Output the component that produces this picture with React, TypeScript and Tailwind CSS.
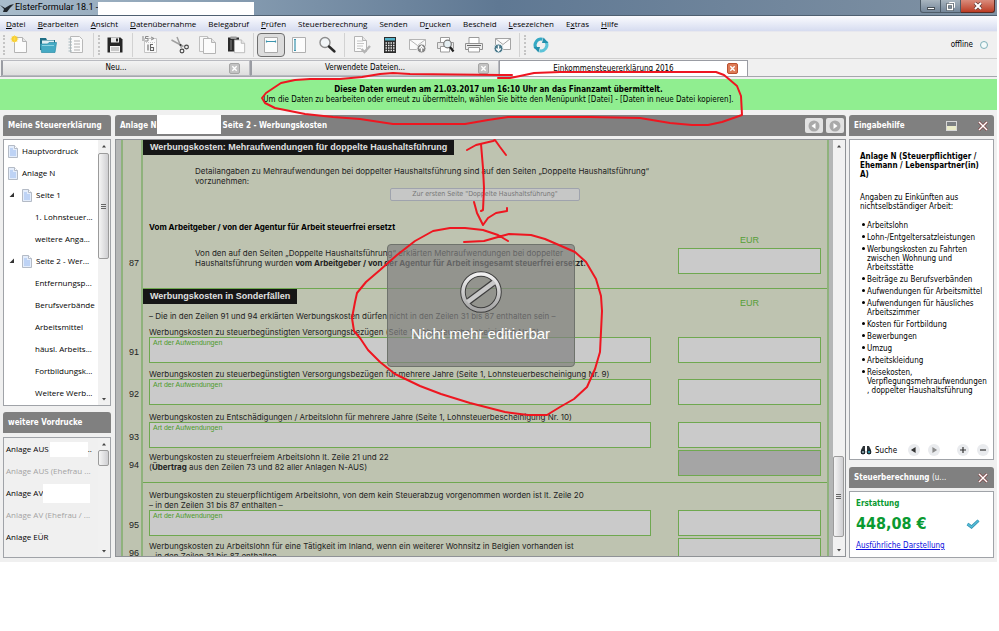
/**
 * ElsterFormular main window
 * - Title bar, menu, toolbar and document tabs
 * - Form tree, form page and help column
 */

import type { ReactNode } from 'react';

const MENU = [
  ['', 'D', 'atei'],
  ['', 'B', 'earbeiten'],
  ['', 'A', 'nsicht'],
  ['', 'D', 'atenübernahme'],
  ['Belegabruf', '', ''],
  ['', 'P', 'rüfen'],
  ['Steuerberechnung', '', ''],
  ['Senden', '', ''],
  ['D', 'r', 'ucken'],
  ['Bescheid', '', ''],
  ['', 'L', 'esezeichen'],
  ['E', 'x', 'tras'],
  ['', 'H', 'ilfe'],
];

const HELP_ITEMS = [
  'Arbeitslohn',
  'Lohn-/Entgeltersatzleistungen',
  'Werbungskosten zu Fahrten zwischen Wohnung und Arbeitsstätte',
  'Beiträge zu Berufsverbänden',
  'Aufwendungen für Arbeitsmittel',
  'Aufwendungen für häusliches Arbeitszimmer',
  'Kosten für Fortbildung',
  'Bewerbungen',
  'Umzug',
  'Arbeitskleidung',
  'Reisekosten, Verpflegungsmehraufwendungen , doppelter Haushaltsführung',
];

const TREE = [
  { label: 'Hauptvordruck', level: 0 },
  { label: 'Anlage N', level: 0 },
  { label: 'Seite 1', level: 1 },
  { label: '1. Lohnsteuer...', level: 2 },
  { label: 'weitere Anga...', level: 2 },
  { label: 'Seite 2 - Wer...', level: 1 },
  { label: 'Entfernungsp...', level: 2 },
  { label: 'Berufsverbände', level: 2 },
  { label: 'Arbeitsmittel', level: 2 },
  { label: 'häusl. Arbeits...', level: 2 },
  { label: 'Fortbildungsk...', level: 2 },
  { label: 'Weitere Werb...', level: 2 },
];

/* ---------- Toolbar icons ---------- */

function Icon({ children }: { children: ReactNode }) {
  return (
    <svg viewBox="0 0 20 20" className="size-5" fill="none" aria-hidden="true">
      {children}
    </svg>
  );
}

function Sheet({ x = 4, y = 2 }: { x?: number; y?: number }) {
  return (
    <g transform={`translate(${x} ${y})`}>
      <path d="M0.5 0.5h8l4 4v11h-12z" fill="#fbfbfb" stroke="#b4b4b4" />
      <path d="M8.5 0.5v4h4" fill="#e6e6e6" stroke="#b4b4b4" />
    </g>
  );
}

const ICONS = {
  newDoc: (
    <Icon>
      <Sheet x={4} y={2} />
      <circle cx="4.5" cy="4" r="3" fill="#f8c81c" />
      <path d="M4.5 0v8M0.5 4h8M1.7 1.2l5.6 5.6M7.3 1.2l-5.6 5.6" stroke="#fbdc55" strokeWidth="0.7" />
    </Icon>
  ),
  folder: (
    <Icon>
      <path d="M2 3h6l1 2h8v10H2z" fill="#1f6f86" />
      <path d="M4 5.500h12v5H4z" fill="#dff0f4" />
      <path d="M2.500 9h7l1.500-1.500h7.500l-1.500 10H3.500z" fill="#45aac4" stroke="#2d8ca6" strokeWidth="0.7" />
      <path d="M4 10.500h12" stroke="#8dd3e2" />
    </Icon>
  ),
  list: (
    <Icon>
      <path d="M4.500 1.500h9l3 3v13h-12z" fill="#fafafa" stroke="#b8b8b8" />
      <path d="M8 6h6M8 9h6M8 12h6M8 15h6" stroke="#b0b0b0" />
      <path d="M2.500 4h3.500M2.500 7h3.500M2.500 10h3.500M2.500 13h3.500M2.500 16h3.500" stroke="#a4b7bd" />
    </Icon>
  ),
  save: (
    <Icon>
      <path d="M2.500 2.500h13l2 2v13h-15z" fill="#262626" />
      <path d="M6 2.500h8v5H6z" fill="#e9e9e9" />
      <path d="M11 3.500h2v3h-2z" fill="#262626" />
      <path d="M5 11h10v6.500H5z" fill="#f4f4f4" />
      <path d="M6 13h8M6 15h8" stroke="#8c8c8c" strokeWidth="0.8" />
    </Icon>
  ),
  calendar: (
    <Icon>
      <path d="M4.500 3.500h12v14h-12z" fill="#fafafa" stroke="#c4c4c4" />
      <path d="M3 1v5M8.500 1.500h-3v2h2.500v2.500h-3M11 2l3 1.500-3 1.500" stroke="#888" />
      <path d="M8 9.500v6M13 9.500h-2.500v6h3v-3h-3" stroke="#666" strokeWidth="1.100" />
      <path d="M6 7.500h9" stroke="#c9c9c9" strokeDasharray="1 1" />
    </Icon>
  ),
  cut: (
    <Icon>
      <path d="M1.500 5l12 6.500M7 2l4.500 11" stroke="#a0a0a0" strokeWidth="1.500" />
      <circle cx="16.500" cy="12" r="1.900" stroke="#444" strokeWidth="1.100" />
      <circle cx="12" cy="16" r="1.900" stroke="#444" strokeWidth="1.100" />
      <circle cx="10.500" cy="10" r="1" fill="#333" />
    </Icon>
  ),
  copy: (
    <Icon>
      <g opacity="0.8">
        <Sheet x={1} y={1} />
      </g>
      <Sheet x={5} y={3} />
    </Icon>
  ),
  paste: (
    <Icon>
      <path d="M2 2.500h11v14H2z" fill="#2b2b2b" />
      <path d="M4.500 1.500h6v2.500h-6z" fill="#9b9b9b" />
      <path d="M4 5h2v10H4z" fill="#5a5a5a" />
      <g transform="translate(8 4.500) scale(0.850)">
        <Sheet x={0} y={0} />
      </g>
    </Icon>
  ),
  pageWidth: (
    <Icon>
      <path d="M3.500 2.500h13v15h-13z" fill="#fcfcfc" stroke="#aaa" />
      <path d="M5 6.500h10M5.500 5.500v2M14.500 5.500v2" stroke="#3b93ad" strokeWidth="1.200" />
    </Icon>
  ),
  pageHeight: (
    <Icon>
      <path d="M3.500 2.500h13v15h-13z" fill="#fcfcfc" stroke="#b0b0b0" />
      <path d="M6 4v12M5 4.500h2M5 15.500h2" stroke="#3b93ad" strokeWidth="1.200" />
    </Icon>
  ),
  zoom: (
    <Icon>
      <circle cx="8" cy="7.500" r="5" fill="#f2f6f8" stroke="#8d8d8d" strokeWidth="1.400" />
      <path d="M12 11.500l5.500 5" stroke="#2a2a2a" strokeWidth="2.400" strokeLinecap="round" />
    </Icon>
  ),
  check: (
    <Icon>
      <Sheet x={2} y={1} />
      <path d="M5 6h6M5 8.500h7M5 11h6M5 13.500h4" stroke="#c6c6c6" />
      <path d="M9.500 14l3 3 5.500-6" stroke="#b4b4b4" strokeWidth="2.400" />
    </Icon>
  ),
  calculator: (
    <Icon>
      <path d="M4 2h12v16H4z" fill="#2d2d2d" />
      <path d="M5 3h10v2.500H5z" fill="#54b4cb" />
      <path d="M5.500 8h9.500M5.500 10.500h9.500M5.500 13h9.500M5.500 15.500h9.500" stroke="#e6e6e6" strokeWidth="1.300" strokeDasharray="1.500 1" />
    </Icon>
  ),
  mailUp: (
    <Icon>
      <path d="M1.500 4.500h16v10h-16z" fill="#fbfbfb" stroke="#b4b4b4" />
      <path d="M1.500 4.500l8 6 8-6" stroke="#b4b4b4" />
      <circle cx="13.500" cy="13.500" r="4.500" fill="#868686" stroke="#eee" />
      <path d="M13.500 16.500v-3.500M11.300 13.500l2.200-2.500 2.200 2.500" stroke="#fff" strokeWidth="1.400" />
    </Icon>
  ),
  preview: (
    <Icon>
      <path d="M4.500 7V2.500h9V7" fill="#fff" stroke="#9b9b9b" />
      <path d="M1.500 7.500h16v6h-16z" fill="#e8e8e8" stroke="#9b9b9b" />
      <path d="M4.500 11.500h9v5.500h-9z" fill="#fff" stroke="#9b9b9b" />
      <circle cx="11.500" cy="9" r="3.800" fill="#e4eef2" stroke="#777" strokeWidth="1.200" />
      <path d="M14 12l3.500 4.500" stroke="#222" strokeWidth="2.200" />
    </Icon>
  ),
  printer: (
    <Icon>
      <path d="M5 8V2.500h10V8" fill="#fff" stroke="#9b9b9b" />
      <path d="M1.500 8.500h17v6h-17z" fill="#ececec" stroke="#909090" />
      <path d="M3 10.500h14" stroke="#666" />
      <path d="M4.500 12.500h11v4.500h-11z" fill="#fff" stroke="#9b9b9b" />
    </Icon>
  ),
  mailDown: (
    <Icon>
      <path d="M3.500 3.500h15v11h-15z" fill="#fbfbfb" stroke="#a4a4a4" />
      <path d="M3.500 3.500l7.500 6 7.500-6" stroke="#a4a4a4" />
      <circle cx="6.500" cy="13.500" r="4.500" fill="#49788a" stroke="#e8eef0" />
      <path d="M6.500 10.500v4M4.300 13.500l2.200 2.500 2.200-2.500" stroke="#fff" strokeWidth="1.400" />
    </Icon>
  ),
  refresh: (
    <Icon>
      <path d="M11.500 4.200a6 6 0 0 0-6.500 9" stroke="#35a9c4" strokeWidth="3" />
      <path d="M8.500 15.800a6 6 0 0 0 6.500-9" stroke="#5cc3d8" strokeWidth="3" />
      <path d="M2.500 12h6.500l-1.500 5.500z" fill="#2390ad" />
      <path d="M17.500 8h-6.500l1.500-5.500z" fill="#2390ad" />
    </Icon>
  ),
};

function ToolButton({ label, active = false, children }: { label: string; active?: boolean; children: ReactNode }) {
  return (
    <button
      type="button"
      aria-label={label}
      className={
        active
          ? 'flex h-6 w-7 shrink-0 items-center justify-center rounded-sm border border-[#6f6f6f] bg-[#dcdcdc]'
          : 'flex h-6 w-7 shrink-0 items-center justify-center'
      }
    >
      {children}
    </button>
  );
}

function Separator() {
  return <span className="mx-[3px] h-6 w-px shrink-0 bg-[#d2d2d2]" />;
}

function Grip() {
  return <span className="mx-px h-5 shrink-0 border-l-2 border-dotted border-[#c4c4c4]" />;
}

/* ---------- Shared parts ---------- */

function PanelHeader({ children }: { children: ReactNode }) {
  return (
    <div className="flex h-[21px] shrink-0 items-center overflow-hidden rounded-t-[3px] bg-[#808080] px-[5px] font-['DejaVu_Sans_Condensed','DejaVu_Sans',sans-serif] text-[8px] font-bold whitespace-nowrap text-white">
      {children}
    </div>
  );
}

function ScrollBar({ thumb, grip = true }: { thumb: string; grip?: boolean }) {
  return (
    <div className="flex w-3 shrink-0 flex-col items-center bg-[#f1f1f1]">
      <svg viewBox="0 0 12 12" className="size-3 shrink-0" aria-hidden="true">
        <path d="M4 7.500l2-2.500 2 2.500z" fill="#444" />
      </svg>
      <div className="flex min-h-0 w-full flex-1 flex-col">
        <div className={`flex w-[11px] items-center justify-center rounded-[2px] border border-[#9b9b9b] bg-linear-to-r from-[#f5f5f5] to-[#cfcfd2] ${thumb}`}>
          {grip && (
            <svg viewBox="0 0 5 5" className="size-[5px]" aria-hidden="true">
              <path d="M0 0.500h5M0 2.500h5M0 4.500h5" stroke="#666" />
            </svg>
          )}
        </div>
      </div>
      <svg viewBox="0 0 12 12" className="size-3 shrink-0" aria-hidden="true">
        <path d="M4 5l2 2.500 2-2.500z" fill="#444" />
      </svg>
    </div>
  );
}

function CloseIcon() {
  return (
    <svg viewBox="0 0 12 12" className="size-3" aria-hidden="true">
      <path d="M2 2l8 8M10 2l-8 8" stroke="#7d3434" strokeWidth="2.600" />
      <path d="M2 2l8 8M10 2l-8 8" stroke="#fff" strokeWidth="1.500" />
    </svg>
  );
}

function Tab({ label, active = false }: { label: string; active?: boolean }) {
  return (
    <div
      role="tab"
      aria-selected={active}
      className={
        active
          ? 'flex w-1/4 items-center border-x border-t border-[#9a9ca3] bg-white pr-[9px]'
          : 'flex w-1/4 items-center border border-l-2 border-[#b9bac0] border-l-[#9a9ca3] bg-linear-to-b from-[#f3f3f3] to-[#dedede] pr-[9px]'
      }
    >
      <span className="flex-1 text-center">{label}</span>
      <button
        type="button"
        aria-label={`${label} schließen`}
        className={
          active
            ? 'flex size-[11px] items-center justify-center rounded-[2px] border border-[#b9502f] bg-[#dd7a55]'
            : 'flex size-[11px] items-center justify-center rounded-[2px] border border-[#a5a5a5] bg-[#c3c3c3]'
        }
      >
        <svg viewBox="0 0 8 8" className="size-[7px]" aria-hidden="true">
          <path d="M1.500 1.500l5 5M6.500 1.500l-5 5" stroke="#fff" strokeWidth="1.600" />
        </svg>
      </button>
    </div>
  );
}

function PageIcon() {
  return (
    <svg viewBox="0 0 10 13" className="h-[13px] w-[10px] shrink-0" aria-hidden="true">
      <path d="M0.500 0.500h6l3 3v9h-9z" fill="#e4edfb" stroke="#b4bbc6" />
      <path d="M2 3h3v2h3v6H2z" fill="#bed3f5" />
      <path d="M6.500 0.500v3h3" fill="#fff" stroke="#b4bbc6" />
    </svg>
  );
}

/* ---------- Form page ---------- */

function FormRow({ line, className = '', children }: { line?: string; className?: string; children?: ReactNode }) {
  return (
    <div className="flex">
      <div className="flex w-[22px] shrink-0 flex-col justify-end border-x-2 border-[#8fb27c] pr-[2px] pb-[6px] text-right font-['Liberation_Sans',Arial,sans-serif] text-[9px] leading-[10px]">
        {line}
      </div>
      <div className={`min-w-0 flex-1 ${className}`}>{children}</div>
    </div>
  );
}

function Amount({ line, dark = false }: { line: string; dark?: boolean }) {
  return (
    <input
      readOnly
      aria-label={`Zeile ${line}, Betrag in EUR`}
      className={
        dark
          ? 'h-[26px] w-[143px] shrink-0 border border-[#6fa850] bg-[#a5a5a5]'
          : 'h-[26px] w-[143px] shrink-0 border border-[#6fa850] bg-[#cacaca]'
      }
    />
  );
}

function ExpenseFields({ line }: { line: string }) {
  return (
    <div className="flex gap-[27px] pr-[6px]">
      <div className="flex h-[26px] min-w-0 flex-1 flex-col border border-[#6fa850] bg-[#cacaca] px-[3px] pt-px">
        <label htmlFor={`art-${line}`} className="font-['Liberation_Sans',Arial,sans-serif] text-[7px] leading-[8px] text-[#4d9a2b]">
          Art der Aufwendungen
        </label>
        <input id={`art-${line}`} readOnly className="min-h-0 w-full flex-1" />
      </div>
      <Amount line={line} />
    </div>
  );
}

function FormHeading({ children }: { children: ReactNode }) {
  return (
    <h2 className="h-[15px] bg-[#161616] px-[7px] font-['Liberation_Sans',Arial,sans-serif] text-[9px] leading-[14px] font-bold text-[#e0e0e0]">
      {children}
    </h2>
  );
}

function Eur() {
  return (
    <div className="w-[143px] text-center font-['Liberation_Sans',Arial,sans-serif] text-[9px] leading-[10px] text-[#559e36]">EUR</div>
  );
}

function FormPage() {
  return (
    <div className="mr-[4px] ml-[5px] min-w-0 flex-1 border-r-2 border-[#8fb27c] bg-[#bec3b0] font-['Inter','Liberation_Sans',sans-serif] text-[8px] leading-[10px] whitespace-nowrap text-[#222]">
      <FormRow>
        <div className="flex">
          <FormHeading>Werbungskosten: Mehraufwendungen für doppelte Haushaltsführung</FormHeading>
        </div>
      </FormRow>
      <FormRow className="pt-[11px] pl-[52px]">
        <p>
          Detailangaben zu Mehraufwendungen bei doppelter Haushaltsführung sind auf den Seiten „Doppelte Haushaltsführung“
          <br />
          vorzunehmen:
        </p>
      </FormRow>
      <FormRow className="flex justify-center pt-[2px]">
        <button
          type="button"
          className="h-[13px] w-[190px] rounded-[2px] border border-[#9fa3ad] bg-[#c6c7c6] font-['DejaVu_Sans_Condensed','DejaVu_Sans',sans-serif] text-[7px] leading-[11px] text-[#777]"
        >
          Zur ersten Seite "Doppelte Haushaltsführung"
        </button>
      </FormRow>
      <FormRow className="pt-[21px] pl-[6px]">
        <p className="font-bold text-black">Vom Arbeitgeber / von der Agentur für Arbeit steuerfrei ersetzt</p>
      </FormRow>
      <FormRow className="flex justify-end py-[3px] pr-[6px]">
        <Eur />
      </FormRow>
      <FormRow line="87" className="flex justify-between pr-[6px] pl-[52px]">
        <p>
          Von den auf den Seiten „Doppelte Haushaltsführung“ erklärten Mehraufwendungen bei doppelter
          <br />
          Haushaltsführung wurden <b>vom Arbeitgeber / von der Agentur für Arbeit insgesamt steuerfrei ersetzt.</b>
        </p>
        <Amount line="87" />
      </FormRow>
      <FormRow className="h-[15px] border-b border-[#6fa850]" />
      <FormRow className="flex h-[22px] items-start justify-between pr-[6px]">
        <FormHeading>Werbungskosten in Sonderfällen</FormHeading>
        <div className="pt-[9px]">
          <Eur />
        </div>
      </FormRow>
      <FormRow className="pb-[6px] pl-[6px]">
        <p>– Die in den Zeilen 91 und 94 erklärten Werbungskosten dürfen nicht in den Zeilen 31 bis 87 enthalten sein –</p>
      </FormRow>
      <FormRow line="91" className="pl-[6px]">
        <p>Werbungskosten zu steuerbegünstigten Versorgungsbezügen (Seite 1, Lohnsteuerbescheinigung Nr. 8)</p>
        <ExpenseFields line="91" />
      </FormRow>
      <FormRow line="92" className="pt-[6px] pl-[6px]">
        <p>Werbungskosten zu steuerbegünstigten Versorgungsbezügen für mehrere Jahre (Seite 1, Lohnsteuerbescheinigung Nr. 9)</p>
        <ExpenseFields line="92" />
      </FormRow>
      <FormRow line="93" className="pt-[7px] pl-[6px]">
        <p>Werbungskosten zu Entschädigungen / Arbeitslohn für mehrere Jahre (Seite 1, Lohnsteuerbescheinigung Nr. 10)</p>
        <ExpenseFields line="93" />
      </FormRow>
      <FormRow line="94" className="flex justify-between pt-[2px] pr-[6px] pl-[6px]">
        <p className="pt-[2px]">
          Werbungskosten zu steuerfreiem Arbeitslohn lt. Zeile 21 und 22
          <br />(<b>Übertrag</b> aus den Zeilen 73 und 82 aller Anlagen N-AUS)
        </p>
        <Amount line="94" dark />
      </FormRow>
      <FormRow className="h-[7px] border-b border-[#6fa850]" />
      <FormRow line="95" className="pt-[7px] pl-[6px]">
        <p>
          Werbungskosten zu steuerpflichtigem Arbeitslohn, von dem kein Steuerabzug vorgenommen worden ist lt. Zeile 20
          <br />– in den Zeilen 31 bis 87 enthalten –
        </p>
        <ExpenseFields line="95" />
      </FormRow>
      <FormRow line="96" className="flex justify-between pt-[2px] pr-[6px] pl-[6px]">
        <p className="pt-[3px]">
          Werbungskosten zu Arbeitslohn für eine Tätigkeit im Inland, wenn ein weiterer Wohnsitz in Belgien vorhanden ist
          <br />– in den Zeilen 31 bis 87 enthalten –
        </p>
        <Amount line="96" />
      </FormRow>
    </div>
  );
}

function LockedNotice() {
  return (
    <div className="absolute top-[104px] left-1/2 flex h-[123px] w-[188px] -translate-x-1/2 flex-col items-center gap-3 rounded-[4px] border border-[#6f736c] bg-[#808080]/70 pt-[26px] font-['Liberation_Sans',Arial,sans-serif] text-[15px] text-white">
      <svg viewBox="0 0 42 42" className="size-[42px] shrink-0" aria-hidden="true">
        <defs>
          <linearGradient id="ring" x1="0" y1="0" x2="0" y2="1">
            <stop offset="0" stopColor="#f2f2f2" />
            <stop offset="1" stopColor="#a4a4a4" />
          </linearGradient>
        </defs>
        <circle cx="21" cy="21" r="18" fill="none" stroke="#3d3d3d" strokeWidth="5.500" />
        <path d="M9 30L33 12" stroke="#3d3d3d" strokeWidth="7" />
        <circle cx="21" cy="21" r="18" fill="none" stroke="url(#ring)" strokeWidth="3.600" />
        <path d="M7.500 31L34.500 11" stroke="#c9c9c9" strokeWidth="4.600" />
      </svg>
      <p className="leading-[18px]">Nicht mehr editierbar</p>
    </div>
  );
}

/* ---------- Side columns ---------- */

function LeftColumn() {
  return (
    <aside className="flex w-[108px] shrink-0 flex-col">
      <PanelHeader>Meine Steuererklärung</PanelHeader>
      <div className="mt-[3px] flex border border-[#a0a3a8] bg-white">
        <ul className="min-w-0 flex-1 pb-px">
          {TREE.map((node) => (
            <li key={node.label} className="flex h-[22px] items-center gap-[4px] overflow-hidden whitespace-nowrap">
              {node.level === 0 && <span className="-ml-px w-px" />}
              {node.level === 1 && (
                <svg viewBox="0 0 6 6" className="mr-[3px] ml-[5px] size-[6px] shrink-0" aria-hidden="true">
                  <path d="M5 0.500v4.500H0.500z" fill="#333" />
                </svg>
              )}
              {node.level === 2 ? <span className="w-[27px] shrink-0" /> : <PageIcon />}
              <span>{node.label}</span>
            </li>
          ))}
        </ul>
        <ScrollBar thumb="mt-px h-[106px]" />
      </div>
      <div className="mt-[6px]">
        <PanelHeader>weitere Vordrucke</PanelHeader>
      </div>
      <div className="mt-[4px] flex h-[121px] border border-[#a0a3a8] bg-[#f0f0f0]">
        <ul className="min-w-0 flex-1 overflow-hidden pl-[2px] whitespace-nowrap">
          <li className="flex h-[22px] items-center">
            Anlage AUS
            <span className="ml-px h-[15px] w-[38px] bg-white" />
            ..
          </li>
          <li className="flex h-[22px] items-center text-[#a3a3a3]">Anlage AUS (Ehefrau ...</li>
          <li className="flex h-[22px] items-center">
            Anlage AV
            <span className="h-[19px] w-[47px] bg-white" />
          </li>
          <li className="flex h-[22px] items-center text-[#a3a3a3]">Anlage AV (Ehefrau / ...</li>
          <li className="flex h-[22px] items-center">Anlage EÜR</li>
          <li className="flex h-[22px] items-center">Anlage FW</li>
        </ul>
        <ScrollBar thumb="h-[16px]" grip={false} />
      </div>
    </aside>
  );
}

function RoundButton({ label, path, color = '#333' }: { label: string; path: string; color?: string }) {
  return (
    <button type="button" aria-label={label} className="flex size-3 items-center justify-center rounded-full bg-[#e9ebee]">
      <svg viewBox="0 0 12 12" className="size-3" aria-hidden="true">
        <path d={path} fill={color} stroke={color} strokeWidth="1.200" />
      </svg>
    </button>
  );
}

function RightColumn() {
  return (
    <aside className="flex w-[145px] shrink-0 flex-col font-['DejaVu_Sans_Condensed','DejaVu_Sans',sans-serif] text-[8px]">
      <PanelHeader>
        <span className="flex-1">Eingabehilfe</span>
        <button type="button" aria-label="Verkleinern" className="mr-[20px] flex h-[10px] w-[11px] flex-col border border-[#d8d8d8]">
          <span className="w-full flex-1 bg-[#7c7f82]" />
          <span className="h-1 w-full bg-[#ebecc9]" />
        </button>
        <button type="button" aria-label="Eingabehilfe schließen">
          <CloseIcon />
        </button>
      </PanelHeader>
      <section className="mt-[3px] flex flex-1 flex-col border border-[#a0a3a8] bg-white pt-[12px] pr-[4px] pl-[10px] leading-[9px]">
        <h2 className="leading-[9px] font-bold">Anlage N (Steuerpflichtiger / Ehemann / Lebenspartner(in) A)</h2>
        <p className="mt-[14px]">
          Angaben zu Einkünften aus
          <br />
          nichtselbständiger Arbeit:
        </p>
        <ul className="mt-[10px] flex flex-col gap-[3px]">
          {HELP_ITEMS.map((item) => (
            <li key={item} className="flex items-start gap-[2px]">
              <span className="mt-[2px] ml-[2px] size-[3px] shrink-0 rounded-full bg-black" />
              <span className="min-w-0">{item}</span>
            </li>
          ))}
        </ul>
        <div className="mt-auto mb-[3px] flex items-center">
          <button type="button" className="flex items-center gap-[3px]">
            <svg viewBox="0 0 12 10" className="h-[10px] w-3" aria-hidden="true">
              <path d="M3 1h2v8H1V5zM7 1h2l2 4v4H7z" fill="#2d3438" />
              <circle cx="3" cy="7" r="2.400" fill="#1f2a30" />
              <circle cx="9" cy="7" r="2.400" fill="#1f2a30" />
              <circle cx="3" cy="7" r="1" fill="#9fb4be" />
              <circle cx="9" cy="7" r="1" fill="#2fb5c9" />
            </svg>
            Suche
          </button>
          <div className="ml-auto flex gap-[8px]">
            <RoundButton label="Zurück" path="M7 4v4l-3-2z" />
            <RoundButton label="Vor" path="M5 4v4l3-2z" color="#8a8a8a" />
            <span className="w-px" />
            <RoundButton label="Größer" path="M3 6h6M6 3v6" />
            <RoundButton label="Kleiner" path="M3 6h6" />
          </div>
        </div>
      </section>
      <div className="mt-[7px]">
        <PanelHeader>
          <span className="flex-1">
            Steuerberechnung <span className="font-normal">(u...</span>
          </span>
          <button type="button" aria-label="Steuerberechnung schließen">
            <CloseIcon />
          </button>
        </PanelHeader>
      </div>
      <section className="mt-[3px] h-[67px] border border-[#a0a3a8] bg-white px-[6px] pt-[7px] leading-[10px]">
        <h2 className="font-bold text-[#0a9a31]">Erstattung</h2>
        <div className="mt-[5px] flex items-center justify-between pr-[7px] text-[16px] leading-[20px] font-bold text-[#0a9a31]">
          448,08 €
          <svg viewBox="0 0 14 10" className="h-[10px] w-[14px]" fill="none" aria-hidden="true">
            <path d="M1.500 5l4 3 7-6.500" stroke="#2f8fb0" strokeWidth="3" />
            <path d="M1.500 5l4 3 7-6.500" stroke="#55bcd6" strokeWidth="1.600" />
          </svg>
        </div>
        <a href="#darstellung" className="mt-[7px] block text-[#0f10e0] underline">
          Ausführliche Darstellung
        </a>
      </section>
    </aside>
  );
}

/* ---------- Red pen marks over the window ---------- */

function PenMarks() {
  return (
    <svg
      viewBox="0 0 999 631"
      className="pointer-events-none absolute top-0 left-0 h-[631px] w-[999px]"
      fill="none"
      stroke="#ee1620"
      strokeWidth="2"
      strokeLinecap="round"
      strokeLinejoin="round"
      aria-hidden="true"
    >
      <path d="M498 78H510L520 76L534 73L560 72H716L724 75L730 80L737 86L741 96L742 115L722 122L708 125H692L670 123L640 118L590 117H508L488 120L465 124H393L360 119L333 117L305 114L290 111L275 108L265 103L262 98L266 93L275 87L281 83L295 80L310 79L340 79L362 77L380 74L393 73L410 74L500 75H512" />
      <path d="M467 150L476 145L493 141L495 140L500 147L506 155M481 144L483 168L484 188L483 210L481 211M474 202L477 213L483 225L488 218L496 213L507 211V208" />
      <path d="M464 242L484 241L498 237L509 234L531 235L545 239L575 252L586 262L596 279L601 296L602 311L600 352L595 369L587 387L574 399L560 407L547 415H528L505 412L470 403L441 394L420 386L395 374L380 362L368 350L360 338L354 331L352 318L355 302L357 293L366 282L380 270L397 255L415 241L433 231L450 228H465L483 230L498 235L508 241" />
    </svg>
  );
}

export default function App() {
  return (
    <div className="relative min-h-screen bg-white pr-[2px] font-['Open_Sans','Noto_Sans',sans-serif] text-[8px] leading-[10px] text-black">
      <div className="bg-[#f0f0f0]">
        {/* Title bar */}
        <header className="flex h-[16px] items-start border-b border-[#4f6071] bg-linear-to-r from-[#a9bccb] via-[#5f7893] to-[#8092a4]">
          <svg viewBox="0 0 14 12" className="mt-[2px] h-[12px] w-[14px]" aria-hidden="true">
            <path d="M0 3l5 3 5-3 4-1-4 4-3 4-4 0 1-3z" fill="#20262c" />
          </svg>
          <h1 className="ml-px h-[15px] font-['Roboto',sans-serif] text-[9px] leading-[15px]">ElsterFormular 18.1 -</h1>
          <span className="mt-[2px] h-[13px] w-[156px] bg-white" />
          <div className="ml-auto flex pr-[2px]">
            <button type="button" aria-label="Minimieren" className="flex h-[13px] w-[21px] items-center justify-center rounded-bl-[3px] border border-t-0 border-[#4d5b68] bg-linear-to-b from-[#a9b5bf] to-[#75879a]">
              <span className="mt-1 h-[3px] w-2 border border-[#4a5259] bg-white" />
            </button>
            <button type="button" aria-label="Verkleinern" className="flex h-[13px] w-[20px] items-center justify-center border-r border-b border-[#4d5b68] bg-linear-to-b from-[#a9b5bf] to-[#75879a]">
              <svg viewBox="0 0 10 10" className="size-[10px]" fill="none" aria-hidden="true">
                <path d="M3.500 1.500h5v5h-5z" stroke="#fff" />
                <path d="M1.500 3.500h5v5h-5z" fill="#7d8c9a" stroke="#4a5259" strokeWidth="2.500" />
                <path d="M1.500 3.500h5v5h-5z" stroke="#fff" strokeWidth="1.300" />
              </svg>
            </button>
            <button type="button" aria-label="Schließen" className="flex h-[13px] w-[34px] items-center justify-center rounded-br-[3px] border-r border-b border-[#5b2a22] bg-linear-to-b from-[#d98b7b] to-[#bb3a21]">
              <svg viewBox="0 0 10 8" className="h-2 w-[10px]" aria-hidden="true">
                <path d="M2 1l6 6M8 1l-6 6" stroke="#5d3a36" strokeWidth="3.400" />
                <path d="M2 1l6 6M8 1l-6 6" stroke="#fff" strokeWidth="2" />
              </svg>
            </button>
          </div>
        </header>

        {/* Menu */}
        <nav className="flex h-[16px] items-center gap-[12px] border-b border-[#e8e8ee] bg-linear-to-b from-[#fbfbfe] to-[#d6dcf0] pl-[6px] text-[8px]">
          {MENU.map(([before, key, after]) => (
            <button key={before + key + after} type="button" className="whitespace-nowrap">
              {before}
              {key && <span className="underline">{key}</span>}
              {after}
            </button>
          ))}
        </nav>

        {/* Toolbar */}
        <div className="flex h-[27px] items-center border-b border-[#cfcfcf] pl-[2px]">
          <Grip />
          <ToolButton label="Neu">{ICONS.newDoc}</ToolButton>
          <ToolButton label="Öffnen">{ICONS.folder}</ToolButton>
          <ToolButton label="Liste">{ICONS.list}</ToolButton>
          <Separator />
          <Grip />
          <ToolButton label="Speichern">{ICONS.save}</ToolButton>
          <Separator />
          <ToolButton label="Jahr">{ICONS.calendar}</ToolButton>
          <span className="w-[2px]" />
          <ToolButton label="Ausschneiden">{ICONS.cut}</ToolButton>
          <ToolButton label="Kopieren">{ICONS.copy}</ToolButton>
          <ToolButton label="Einfügen">{ICONS.paste}</ToolButton>
          <Separator />
          <ToolButton label="Seitenbreite" active>
            {ICONS.pageWidth}
          </ToolButton>
          <ToolButton label="Seitenhöhe">{ICONS.pageHeight}</ToolButton>
          <ToolButton label="Zoom">{ICONS.zoom}</ToolButton>
          <Separator />
          <ToolButton label="Prüfen">{ICONS.check}</ToolButton>
          <ToolButton label="Berechnen">{ICONS.calculator}</ToolButton>
          <ToolButton label="Senden">{ICONS.mailUp}</ToolButton>
          <ToolButton label="Druckvorschau">{ICONS.preview}</ToolButton>
          <ToolButton label="Drucken">{ICONS.printer}</ToolButton>
          <ToolButton label="Abholen">{ICONS.mailDown}</ToolButton>
          <Separator />
          <Grip />
          <ToolButton label="Aktualisieren">{ICONS.refresh}</ToolButton>
          <span className="ml-auto font-['DejaVu_Sans_Condensed','DejaVu_Sans',sans-serif]">offline</span>
          <span className="mr-[9px] ml-[7px] size-2 rounded-full border border-[#7fb0b8] bg-[#f3fafa]" />
        </div>

        {/* Document tabs */}
        <div role="tablist" className="flex h-[18px] border-b border-[#a5a7ad] pt-px pl-px font-['DejaVu_Sans_Condensed','DejaVu_Sans',sans-serif]">
          <Tab label="Neu..." />
          <Tab label="Verwendete Dateien..." />
          <Tab label="Einkommensteuererklärung 2016" active />
        </div>

        {/* Transmission notice */}
        <div className="mt-[2px] h-[31px] bg-[#90ee90] pt-[6px] text-center font-['DejaVu_Sans_Condensed','DejaVu_Sans',sans-serif]">
          <p className="font-bold">Diese Daten wurden am 21.03.2017 um 16:10 Uhr an das Finanzamt übermittelt.</p>
          <p>Um die Daten zu bearbeiten oder erneut zu übermitteln, wählen Sie bitte den Menüpunkt [Datei] - [Daten in neue Datei kopieren].</p>
        </div>

        {/* Workspace */}
        <main className="flex items-stretch px-[3px] pt-[5px] pb-1">
          <LeftColumn />
          <div className="ml-1 flex min-w-0 flex-1 flex-col">
            <PanelHeader>
              Anlage N
              <span className="mr-[2px] h-[19px] w-[64px] self-start bg-white" />
              <span className="flex-1">Seite 2 - Werbungskosten</span>
              <div className="-mr-[3px] flex gap-[3px]">
                <button type="button" aria-label="Vorherige Seite" className="flex h-[15px] w-[18px] items-center justify-center rounded-[2px] bg-[#e2e2e2]">
                  <svg viewBox="0 0 12 12" className="size-3" aria-hidden="true">
                    <circle cx="6" cy="6" r="5.500" fill="#a9a9a9" />
                    <path d="M7.500 3v6L3.500 6z" fill="#fff" />
                  </svg>
                </button>
                <button type="button" aria-label="Nächste Seite" className="flex h-[15px] w-[18px] items-center justify-center rounded-[2px] bg-[#e2e2e2]">
                  <svg viewBox="0 0 12 12" className="size-3" aria-hidden="true">
                    <circle cx="6" cy="6" r="5.500" fill="#a9a9a9" />
                    <path d="M4.500 3v6l4-3z" fill="#fff" />
                  </svg>
                </button>
              </div>
            </PanelHeader>
            <div className="relative mt-[3px] flex h-[418px] overflow-hidden border border-[#8f9296] bg-[#b4b6b6]">
              <FormPage />
              <ScrollBar thumb="mt-[304px] h-[81px]" />
              <LockedNotice />
            </div>
          </div>
          <div className="ml-[3px] flex">
            <RightColumn />
          </div>
        </main>
      </div>
      <PenMarks />
    </div>
  );
}
